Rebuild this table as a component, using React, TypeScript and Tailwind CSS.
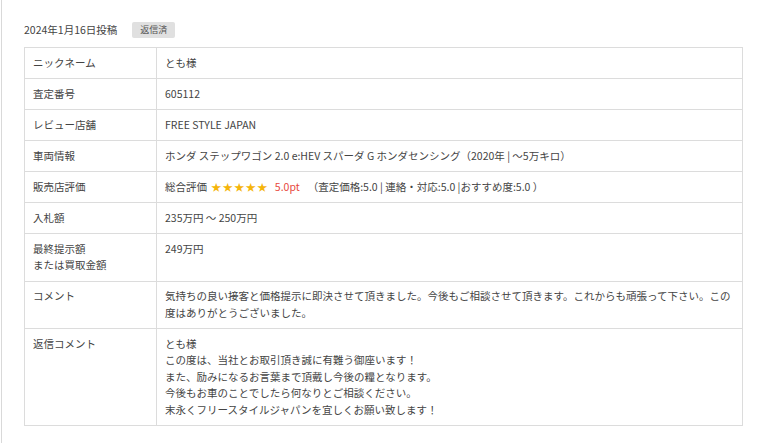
const rows: { label: string[]; value: React.ReactNode }[] = [
  { label: ['ニックネーム'], value: 'とも様' },
  { label: ['査定番号'], value: '605112' },
  { label: ['レビュー店舗'], value: 'FREE STYLE JAPAN' },
  {
    label: ['車両情報'],
    value: 'ホンダ ステップワゴン 2.0 e:HEV スパーダ G ホンダセンシング（2020年 | ～5万キロ）',
  },
  {
    label: ['販売店評価'],
    value: (
      <>
        総合評価 <span className="ml-[2px] text-[10px] tracking-[1.5px] text-[#f5b50a]">★★★★★</span>
        <span className="ml-[6px] text-[#e8473c]">5.0pt</span>
        <span className="ml-[8px]">（査定価格:5.0 | 連絡・対応:5.0 |おすすめ度:5.0 ）</span>
      </>
    ),
  },
  { label: ['入札額'], value: '235万円 ～ 250万円' },
  { label: ['最終提示額', 'または買取金額'], value: '249万円' },
  {
    label: ['コメント'],
    value:
      '気持ちの良い接客と価格提示に即決させて頂きました。今後もご相談させて頂きます。これからも頑張って下さい。この度はありがとうございました。',
  },
  {
    label: ['返信コメント'],
    value: (
      <>
        とも様
        <br />
        この度は、当社とお取引頂き誠に有難う御座います！
        <br />
        また、励みになるお言葉まで頂戴し今後の糧となります。
        <br />
        今後もお車のことでしたら何なりとご相談ください。
        <br />
        末永くフリースタイルジャパンを宜しくお願い致します！
      </>
    ),
  },
];

export default function App() {
  return (
    <div
      className="ml-px min-h-[443px] border-l border-[#d9d9d9] bg-white pl-[22px] pr-[21px] pt-[22px] text-[#444]"
      style={{ fontFamily: '"Noto Sans CJK JP", "Noto Sans", sans-serif' }}
    >
      <div className="mb-[9px] flex h-4 items-center">
        <span className="text-[10.5px] leading-4">2024年1月16日投稿</span>
        <span className="ml-[15px] flex h-4 items-center rounded-[2px] bg-[#e0e0e0] px-[8px] text-[9px] text-[#555]">
          返信済
        </span>
      </div>

      <table className="w-full border-collapse text-[10.5px] leading-[16.5px]">
        <tbody>
          {rows.map((row, i) => (
            <tr key={i}>
              <td className="w-[132px] border border-[#dcdcdc] px-[8px] py-[6.75px] align-top">
                {row.label.map((l, j) => (
                  <div key={j}>{l}</div>
                ))}
              </td>
              <td className="border border-[#dcdcdc] px-[8px] py-[6.75px] align-top">{row.value}</td>
            </tr>
          ))}
        </tbody>
      </table>
    </div>
  );
}
